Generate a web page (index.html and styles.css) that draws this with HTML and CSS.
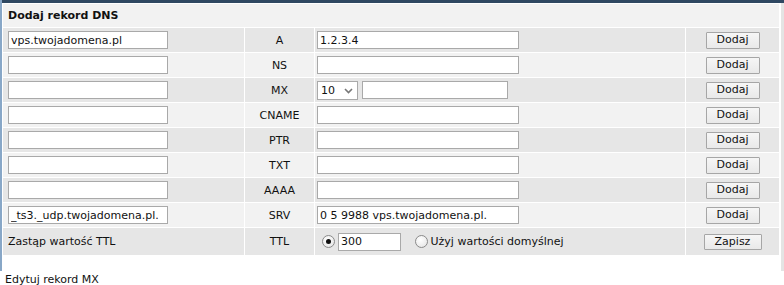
FILE: index.html
```html
<!DOCTYPE html>
<html lang="pl">
<head>
    <meta charset="UTF-8">
    <title>Dodaj rekord DNS</title>
    <link rel="stylesheet" href="styles.css">
</head>
<body>
<div class="frame">
    <div class="topbar"></div>
    <table class="dns">
        <colgroup>
            <col class="c-name">
            <col class="c-type">
            <col class="c-value">
            <col class="c-action">
        </colgroup>
        <tr class="head">
            <th colspan="4">Dodaj rekord DNS</th>
        </tr>
        <tr class="dark">
            <td><input class="name" type="text" value="vps.twojadomena.pl"></td>
            <td class="type">A</td>
            <td><input class="value" type="text" value="1.2.3.4"></td>
            <td class="action"><button>Dodaj</button></td>
        </tr>
        <tr class="light">
            <td><input class="name" type="text"></td>
            <td class="type">NS</td>
            <td><input class="value" type="text"></td>
            <td class="action"><button>Dodaj</button></td>
        </tr>
        <tr class="dark">
            <td><input class="name" type="text"></td>
            <td class="type">MX</td>
            <td>
                <span class="select-wrap">
                    <select class="prio">
                        <option>10</option>
                        <option>20</option>
                        <option>30</option>
                    </select>
                    <svg class="chevron" width="9" height="6" viewBox="0 0 9 6"><path d="M1 1 L4.5 4.5 L8 1" fill="none" stroke="#777" stroke-width="1.6"/></svg>
                </span><input class="value mx" type="text">
            </td>
            <td class="action"><button>Dodaj</button></td>
        </tr>
        <tr class="light">
            <td><input class="name" type="text"></td>
            <td class="type">CNAME</td>
            <td><input class="value" type="text"></td>
            <td class="action"><button>Dodaj</button></td>
        </tr>
        <tr class="dark">
            <td><input class="name" type="text"></td>
            <td class="type">PTR</td>
            <td><input class="value" type="text"></td>
            <td class="action"><button>Dodaj</button></td>
        </tr>
        <tr class="light">
            <td><input class="name" type="text"></td>
            <td class="type">TXT</td>
            <td><input class="value" type="text"></td>
            <td class="action"><button>Dodaj</button></td>
        </tr>
        <tr class="dark">
            <td><input class="name" type="text"></td>
            <td class="type">AAAA</td>
            <td><input class="value" type="text"></td>
            <td class="action"><button>Dodaj</button></td>
        </tr>
        <tr class="light">
            <td><input class="name" type="text" value="_ts3._udp.twojadomena.pl."></td>
            <td class="type">SRV</td>
            <td><input class="value" type="text" value="0 5 9988 vps.twojadomena.pl."></td>
            <td class="action"><button>Dodaj</button></td>
        </tr>
        <tr class="dark ttl">
            <td class="label">Zastąp wartość TTL</td>
            <td class="type">TTL</td>
            <td>
                <label class="opt"><input type="radio" name="ttl" checked><input class="ttl-value" type="text" value="300"></label>
                <label class="opt default"><input type="radio" name="ttl">Użyj wartości domyślnej</label>
            </td>
            <td class="action"><button class="save">Zapisz</button></td>
        </tr>
    </table>
</div>
<p class="edit">Edytuj rekord MX</p>
</body>
</html>
```

FILE: styles.css
```css
/* Page base */
body {
    margin: 0;
    font-family: "DejaVu Sans", Verdana, sans-serif;
    font-size: 11px;
    color: #111;
    background: #fff;
}

/* Frame with the blue edge */
.frame {
    border-left: 2px solid #88a7c7;
    border-right: 3px solid #e4e4e4;
    padding-bottom: 15px;
}

.topbar {
    height: 3px;
    background: #2f4862;
    margin-right: -3px;
}

/* DNS table */
.dns {
    border-collapse: separate;
    border-spacing: 1px;
    table-layout: fixed;
    width: 778px;
}

.c-name { width: 241px; }
.c-type { width: 69px; }
.c-value { width: 370px; }
.c-action { width: 93px; }

.dns th,
.dns td {
    padding: 0 2px;
    height: 24px;
    vertical-align: middle;
    white-space: nowrap;
}

.dns .head th {
    height: 23px;
    text-align: left;
    padding-left: 5px;
    font-weight: bold;
    font-size: 11px;
    background: #f2f2f2;
}

.dns td:first-child {
    padding-left: 5px;
}

.dark td { background: #e6e6e6; }
.light td { background: #f2f2f2; }

.dns .ttl td { height: 27px; }

.type {
    text-align: center;
}

.action {
    text-align: center;
}

/* Form fields */
input[type="text"] {
    box-sizing: border-box;
    height: 18px;
    margin: 0;
    padding: 0 2px;
    border: 1px solid #a9a9a9;
    background: #fff;
    font-family: "DejaVu Sans", Verdana, sans-serif;
    font-size: 11px;
    color: #111;
    vertical-align: middle;
}

.name { width: 160px; }
.value { width: 202px; }
.value.mx { width: 146px; margin-left: 4px; }
.ttl-value { width: 63px; }

.select-wrap {
    position: relative;
    display: inline-block;
    vertical-align: middle;
}

.prio {
    appearance: none;
    -webkit-appearance: none;
    box-sizing: border-box;
    width: 41px;
    height: 19px;
    margin: 0;
    padding: 0 0 0 3px;
    border: 1px solid #a9a9a9;
    border-radius: 0;
    background: #fff;
    font-family: "DejaVu Sans", Verdana, sans-serif;
    font-size: 11px;
    color: #111;
    display: block;
}

.chevron {
    position: absolute;
    right: 5px;
    top: 7px;
    pointer-events: none;
}

button {
    box-sizing: border-box;
    width: 54px;
    height: 17px;
    padding: 0;
    border: 1px solid #a6a6a6;
    border-radius: 1px;
    background: linear-gradient(#f6f6f6, #e9e9e9);
    font-family: "DejaVu Sans", Verdana, sans-serif;
    font-size: 11px;
    color: #111;
    line-height: 14px;
}

button.save {
    width: 58px;
    height: 16px;
}

/* Radio options in the TTL row */
.opt {
    display: inline-flex;
    align-items: center;
    vertical-align: middle;
}

.opt.default {
    margin-left: 5px;
}

input[type="radio"] {
    appearance: none;
    -webkit-appearance: none;
    box-sizing: border-box;
    width: 13px;
    height: 13px;
    margin: 0 3px 0 5px;
    border: 1px solid #8a8a8a;
    border-radius: 50%;
    background: radial-gradient(circle at 40% 35%, #fff, #e2e2e2);
    position: relative;
}

input[type="radio"]:checked::after {
    content: "";
    position: absolute;
    left: 3px;
    top: 3px;
    width: 5px;
    height: 5px;
    border-radius: 50%;
    background: #111;
}

/* Link text under the frame */
.edit {
    margin: 2px 0 0 5px;
    line-height: 14px;
}
```
